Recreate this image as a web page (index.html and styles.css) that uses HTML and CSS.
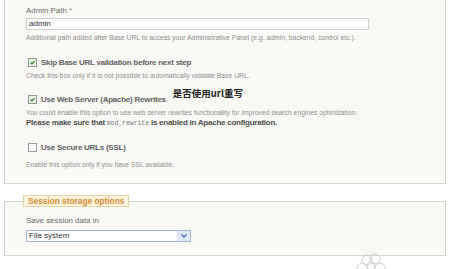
FILE: index.html
```html
<!DOCTYPE html>
<html>
<head>
<meta charset="utf-8">
<link rel="stylesheet" href="styles.css">
</head>
<body>
<div class="fs fs1">
  <div class="lbl">Admin Path <span class="req">*</span></div>
  <div class="input input-wide">admin</div>
  <div class="help help-first">Additional path added after Base URL to access your Administrative Panel (e.g. admin, backend, control etc.).</div>

  <div class="check-row row-skip">
    <span class="cb"><svg viewBox="0 0 9 9" width="9" height="9"><path d="M2 4.5 L3.8 6.3 L7 2.6" fill="none" stroke="#2f7a2f" stroke-width="1.4"/></svg></span>
    <span class="cl">Skip Base URL validation before next step</span>
  </div>
  <div class="help help-after">Check this box only if it is not possible to automatically validate Base URL.</div>

  <div class="check-row row-rewrite">
    <span class="cb"><svg viewBox="0 0 9 9" width="9" height="9"><path d="M2 4.5 L3.8 6.3 L7 2.6" fill="none" stroke="#2f7a2f" stroke-width="1.4"/></svg></span>
    <span class="cl">Use Web Server (Apache) Rewrites</span>
    <span class="note">是否使用url重写</span>
  </div>
  <div class="help help-after">You could enable this option to use web server rewrites functionality for improved search engines optimization.</div>
  <div class="help help-strong">Please make sure that <code>mod_rewrite</code> is enabled in Apache configuration.</div>

  <div class="check-row row-ssl">
    <span class="cb cb-empty"></span>
    <span class="cl">Use Secure URLs (SSL)</span>
  </div>
  <div class="help help-ssl">Enable this option only if you have SSL available.</div>
</div>

<fieldset class="fs fs2">
  <legend class="legend">Session storage options</legend>
  <div class="lbl lbl-session">Save session data in</div>
  <div class="select">
    <span class="select-text">File system</span>
    <span class="select-btn"><svg viewBox="0 0 10 8" width="10" height="8"><path d="M2.5 2.5 L5 5 L7.5 2.5" fill="none" stroke="#4d6fa8" stroke-width="1.5"/></svg></span>
  </div>
</fieldset>

<div class="mark">
  <svg viewBox="0 0 40 16" width="40" height="16">
    <g fill="none" stroke="#cfcfcf" stroke-width="1">
      <circle cx="15" cy="7" r="5"/>
      <circle cx="23" cy="6" r="5"/>
      <circle cx="10" cy="15" r="5"/>
      <circle cx="28" cy="15" r="5"/>
      <circle cx="19" cy="13" r="4"/>
    </g>
  </svg>
</div>
</body>
</html>
```

FILE: styles.css
```css
html, body {
  margin: 0;
  padding: 0;
  background: #ffffff;
}
body {
  width: 455px;
  height: 269px;
  overflow: hidden;
  font-family: "Liberation Sans", Arial, sans-serif;
  color: #666;
}
.fs {
  box-sizing: border-box;
  width: 442px;
  margin: 0 0 0 4px;
  background: #f9f9f5;
  border: 1px solid #d3d3cf;
}
.fs1 {
  border-top: none;
  padding: 6px 0 13px 21px;
}
.lbl {
  height: 10px;
  line-height: 10px;
  font-size: 7.9px;
  color: #6b6b6b;
  white-space: nowrap;
}
.req {
  color: #888;
}
.input {
  box-sizing: border-box;
  margin-top: 2px;
  height: 12px;
  border: 1px solid #d0d0d0;
  background: #fff;
  font-size: 8px;
  line-height: 10px;
  padding-left: 2px;
  color: #333;
}
.input-wide {
  width: 343px;
}
.help {
  height: 10px;
  line-height: 10px;
  font-size: 6.8px;
  color: #8e8e8e;
  white-space: nowrap;
}
.help-first { margin-top: 3px; }
.help-after { margin-top: 4px; }
.help-ssl { margin-top: 8px; }
.help-strong {
  color: #4e4e4e;
  font-size: 8px;
  font-weight: bold;
  letter-spacing: -0.25px;
}
.help-strong code {
  font-family: "Liberation Mono", monospace;
  font-size: 6.4px;
  font-weight: normal;
  letter-spacing: 0;
  color: #7a7a7a;
}
.check-row {
  display: flex;
  align-items: center;
  height: 10px;
}
.row-skip { margin-top: 14px; }
.row-rewrite { margin-top: 13px; }
.row-ssl { margin-top: 14px; }
.cb {
  box-sizing: border-box;
  width: 9px;
  height: 9px;
  margin-left: 2px;
  border: 1px solid #8b9c8b;
  background: #eef2ea;
  display: flex;
  align-items: center;
  justify-content: center;
}
.cb svg { display: block; }
.cb-empty {
  background: #fbfbfb;
  border-color: #9a9a9a;
}
.cl {
  margin-left: 4px;
  font-size: 8px;
  font-weight: bold;
  letter-spacing: -0.25px;
  color: #626262;
  white-space: nowrap;
}
.note {
  margin-left: 7px;
  margin-bottom: 12px;
  font-family: "Noto Sans CJK SC", sans-serif;
  font-weight: bold;
  font-size: 9.5px;
  line-height: 12px;
  color: #222;
  white-space: nowrap;
}
.fs2 {
  margin-top: 11px;
  padding: 0 0 13px 21px;
  min-width: 0;
}
.legend {
  box-sizing: border-box;
  height: 12px;
  margin-left: -3px;
  padding: 0 4px;
  border: 1px solid #e6d7a6;
  background: #fcf4dc;
  color: #d38d2e;
  font-size: 8.3px;
  font-weight: bold;
  line-height: 10px;
  white-space: nowrap;
}
.lbl-session {
  margin-top: 9px;
}
.select {
  box-sizing: border-box;
  margin-top: 4px;
  width: 165px;
  height: 12px;
  border: 1px solid #a5b5cf;
  background: #fff;
  display: flex;
  align-items: center;
}
.select-text {
  flex: 1;
  padding-left: 2px;
  font-size: 8px;
  line-height: 10px;
  color: #333;
}
.select-btn {
  width: 13px;
  height: 10px;
  background: #dfe8f6;
  display: flex;
  align-items: center;
  justify-content: center;
}
.select-btn svg { display: block; }
.mark {
  margin: -3px 0 0 352px;
  height: 16px;
}
.mark svg { display: block; }
```
